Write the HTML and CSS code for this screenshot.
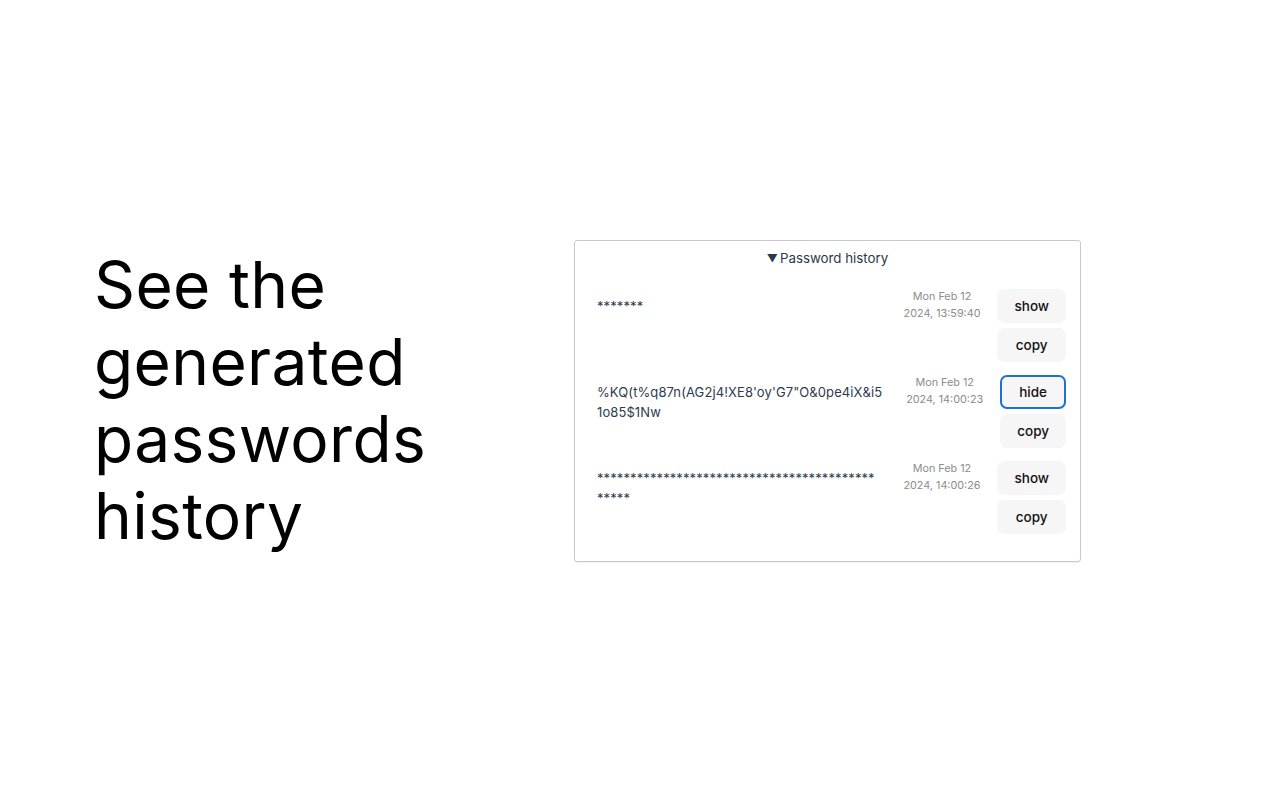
FILE: index.html
```html
<!DOCTYPE html>
<html lang="en">
<head>
<meta charset="utf-8">
<title>Password history</title>
<link rel="stylesheet" href="styles.css">
</head>
<body>
<main class="page">
  <h1 class="headline">See the generated passwords history</h1>
  <section class="card">
    <details class="history" open>
      <summary class="history-title"><span class="caret">▼</span>Password history</summary>
      <ul class="rows">
        <li class="row">
          <div class="pw">*******</div>
          <div class="date">Mon Feb 12<br>2024, 13:59:40</div>
          <div class="actions">
            <button class="btn">show</button>
            <button class="btn">copy</button>
          </div>
        </li>
        <li class="row">
          <div class="pw">%KQ(t%q87n(AG2j4!XE8'oy'G7"O&amp;0pe4iX&amp;i51o85$1Nw</div>
          <div class="date">Mon Feb 12<br>2024, 14:00:23</div>
          <div class="actions">
            <button class="btn btn-focus">hide</button>
            <button class="btn">copy</button>
          </div>
        </li>
        <li class="row">
          <div class="pw">***********************************************</div>
          <div class="date">Mon Feb 12<br>2024, 14:00:26</div>
          <div class="actions">
            <button class="btn">show</button>
            <button class="btn">copy</button>
          </div>
        </li>
      </ul>
    </details>
  </section>
</main>
</body>
</html>
```
FILE: styles.css
```css
html, body {
  margin: 0;
  padding: 0;
  background: #ffffff;
}
body {
  font-family: Inter, "Liberation Sans", sans-serif;
}
.page {
  height: 800px;
  display: flex;
  align-items: center;
  padding-left: 94px;
  box-sizing: border-box;
}
.headline {
  width: 480px;
  margin: 0;
  font-size: 64px;
  font-weight: 400;
  line-height: 77px;
  color: #000;
  letter-spacing: 0.35px;
}
.card {
  width: 507px;
  height: 322px;
  box-sizing: border-box;
  border: 1px solid #c9c9c9;
  border-radius: 3px;
  box-shadow: 0 1px 1px rgba(0,0,0,0.06);
  margin-top: 2px;
}
.history-title {
  list-style: none;
  text-align: center;
  font-size: 13.3px;
  line-height: 18px;
  color: #2a384b;
  padding-top: 8px;
  cursor: pointer;
}
.history-title::-webkit-details-marker { display: none; }
.caret {
  font-size: 11px;
  margin-right: 2px;
  position: relative;
  top: -1px;
}
.rows {
  list-style: none;
  margin: 0;
  padding: 21px 14px 0 22px;
  display: flex;
  flex-direction: column;
  gap: 13px;
}
.row {
  display: flex;
  align-items: flex-start;
}
.pw {
  flex: 1;
  min-width: 0;
  margin-right: 22.5px;
  font-size: 13px;
  line-height: 20px;
  letter-spacing: 0.1px;
  color: #2e3b4e;
  padding-top: 7px;
  word-break: break-all;
}
.date {
  flex: none;
  font-size: 10.8px;
  line-height: 17px;
  color: #8c8c8c;
  text-align: center;
  margin-top: -1px;
  margin-right: 17px;
  white-space: nowrap;
}
.actions {
  display: flex;
  flex-direction: column;
  gap: 5px;
}
.btn {
  font-family: Inter, "Liberation Sans", sans-serif;
  font-size: 13.5px;
  font-weight: 500;
  color: #111;
  background: #f6f6f6;
  border: 2px solid transparent;
  border-radius: 7px;
  height: 34px;
  padding: 0 15px;
}
.btn-focus {
  border-color: #1f6fd6;
}
```
